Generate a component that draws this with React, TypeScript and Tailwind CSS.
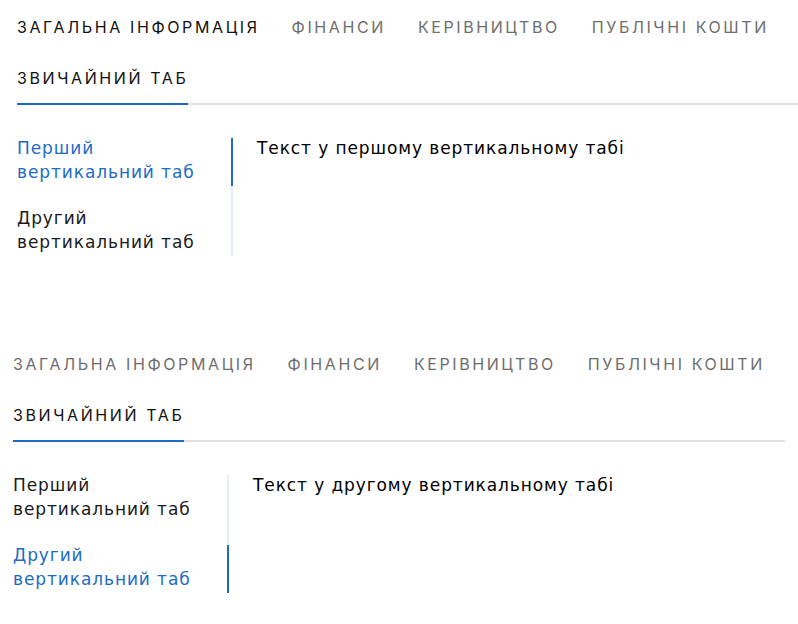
import React from "react";

function TopTabs({ firstDark }: { firstDark: boolean }) {
  const tabs = ["ЗАГАЛЬНА ІНФОРМАЦІЯ", "ФІНАНСИ", "КЕРІВНИЦТВО", "ПУБЛІЧНІ КОШТИ"];
  return (
    <div className="flex flex-wrap gap-x-[32px] pt-[3px] shadow-[inset_0_-2px_0_#e2e2e2] font-['Inter',sans-serif]">
      {tabs.map((t, i) => (
        <div
          key={t}
          className={
            "pt-[12px] pb-[13px] border-b-2 border-transparent text-[16px] leading-[24px] tracking-[2.6px] whitespace-nowrap " +
            (i === 0 && firstDark ? "text-[#111]" : "text-[#6e6e6e]")
          }
        >
          {t}
        </div>
      ))}
      <div className="pt-[12px] pb-[13px] border-b-2 border-[#1c6bc6] text-[16px] leading-[24px] tracking-[2.6px] text-[#111] whitespace-nowrap">
        ЗВИЧАЙНИЙ ТАБ
      </div>
    </div>
  );
}

function Block({ active }: { active: number }) {
  const items = ["Перший", "Другий"];
  return (
    <div>
      <TopTabs firstDark={active === 0} />
      <div className="flex mt-[33px] font-['DejaVu_Sans',sans-serif]">
        <div className="w-[216px] border-r-2 border-[#e6eef8] flex flex-col gap-[22px]">
          {items.map((it, i) => (
            <div
              key={it}
              className={
                "text-[17px] leading-[24px] tracking-[0.9px] mr-[-2px] border-r-2 " +
                (i === active ? "text-[#1c6bc6] border-[#1c6bc6]" : "text-[#1a1a1a] border-transparent")
              }
            >
              <div className="relative -top-[2px]">
                {it}
                <br />
                вертикальний таб
              </div>
            </div>
          ))}
        </div>
        <div className="pl-[24px] text-[17px] leading-[24px] tracking-[0.9px] text-black">
          <div className="relative -top-[2px]">
            {active === 0 ? "Текст у першому вертикальному табі" : "Текст у другому вертикальному табі"}
          </div>
        </div>
      </div>
    </div>
  );
}

export default function App() {
  return (
    <div className="bg-white w-[798px] h-[624px] overflow-hidden">
      <div className="ml-[17px]">
        <Block active={0} />
      </div>
      <div className="ml-[13px] w-[772px] mt-[81px]">
        <Block active={1} />
      </div>
    </div>
  );
}
